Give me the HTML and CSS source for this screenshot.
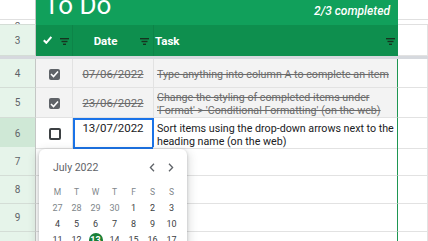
FILE: index.html
```html
<!DOCTYPE html>
<html lang="en">
<head>
  <meta charset="UTF-8">
  <title>To Do</title>
  <link rel="stylesheet" href="styles.css">
</head>
<body>
<div class="sheet">

  <div class="row top">
    <div class="rh rh-top">
      <div class="rh-1"></div>
      <div class="rh-2"><span>2</span></div>
    </div>
    <div class="title">
      <span class="title-text">To Do</span>
      <span class="progress">2/3 completed</span>
    </div>
    <div class="top-d"><div class="rh-1"></div></div>
  </div>

  <div class="row head">
    <div class="rh">3</div>
    <div class="hcell h-a">
      <svg class="tick" width="9" height="8" viewBox="0 0 9 8"><path d="M0.8 4.2 L3.3 6.8 L8.3 1" fill="none" stroke="#fff" stroke-width="2"/></svg>
      <svg class="filter" width="9" height="7" viewBox="0 0 9 7"><rect x="0" y="0" width="9" height="1.4"/><rect x="1.5" y="2.8" width="6" height="1.4"/><rect x="3" y="5.6" width="3" height="1.4"/></svg>
    </div>
    <div class="hcell h-b">
      <span class="hlabel">Date</span>
      <svg class="filter" width="9" height="7" viewBox="0 0 9 7"><rect x="0" y="0" width="9" height="1.4"/><rect x="1.5" y="2.8" width="6" height="1.4"/><rect x="3" y="5.6" width="3" height="1.4"/></svg>
    </div>
    <div class="hcell h-c">
      <span class="hlabel">Task</span>
      <svg class="filter" width="9" height="7" viewBox="0 0 9 7"><rect x="0" y="0" width="9" height="1.4"/><rect x="1.5" y="2.8" width="6" height="1.4"/><rect x="3" y="5.6" width="3" height="1.4"/></svg>
    </div>
    <div class="cell c-d"></div>
  </div>

  <div class="freeze"></div>

  <div class="row r4 done">
    <div class="rh">4</div>
    <div class="cell c-a"><span class="box checked"><svg width="9" height="8" viewBox="0 0 9 8"><path d="M1 4 L3.5 6.5 L8 1.5" fill="none" stroke="#fff" stroke-width="1.6"/></svg></span></div>
    <div class="cell c-b">07/06/2022</div>
    <div class="cell c-c">Type anything into column A to complete an item</div>
    <div class="cell c-d"></div>
  </div>

  <div class="row r5 done">
    <div class="rh">5</div>
    <div class="cell c-a"><span class="box checked"><svg width="9" height="8" viewBox="0 0 9 8"><path d="M1 4 L3.5 6.5 L8 1.5" fill="none" stroke="#fff" stroke-width="1.6"/></svg></span></div>
    <div class="cell c-b">23/06/2022</div>
    <div class="cell c-c">Change the styling of completed items under 'Format' &gt; 'Conditional Formatting' (on the web)</div>
    <div class="cell c-d"></div>
  </div>

  <div class="row r6">
    <div class="rh rh-sel">6</div>
    <div class="cell c-a"><span class="box"></span></div>
    <div class="cell c-b selected">13/07/2022</div>
    <div class="cell c-c">Sort items using the drop-down arrows next to the heading name (on the web)</div>
    <div class="cell c-d"></div>
  </div>

  <div class="row r7">
    <div class="rh">7</div>
    <div class="cell c-a"></div>
    <div class="cell c-b"></div>
    <div class="cell c-c"></div>
    <div class="cell c-d"></div>
  </div>

  <div class="row r8">
    <div class="rh">8</div>
    <div class="cell c-a"></div>
    <div class="cell c-b"></div>
    <div class="cell c-c"></div>
    <div class="cell c-d"></div>
  </div>

  <div class="row r9">
    <div class="rh">9</div>
    <div class="cell c-a"></div>
    <div class="cell c-b"></div>
    <div class="cell c-c"></div>
    <div class="cell c-d"></div>
  </div>

  <div class="row r10">
    <div class="rh">10</div>
    <div class="cell c-a"></div>
    <div class="cell c-b"></div>
    <div class="cell c-c"></div>
    <div class="cell c-d"></div>
  </div>
</div>

<!-- date picker opened on B6 -->
<div class="picker">
  <div class="picker-head">
    <span class="month">July 2022</span>
    <span class="nav">
      <svg width="6" height="9" viewBox="0 0 6 9"><path d="M5 0.8 L1.4 4.5 L5 8.2" fill="none" stroke="#5f6368" stroke-width="1.3"/></svg>
      <svg width="6" height="9" viewBox="0 0 6 9"><path d="M1 0.8 L4.6 4.5 L1 8.2" fill="none" stroke="#5f6368" stroke-width="1.3"/></svg>
    </span>
  </div>
  <div class="days">
    <span class="wd">M</span><span class="wd">T</span><span class="wd">W</span><span class="wd">T</span><span class="wd">F</span><span class="wd">S</span><span class="wd">S</span>
    <span class="other">27</span><span class="other">28</span><span class="other">29</span><span class="other">30</span><span>1</span><span>2</span><span>3</span>
    <span>4</span><span>5</span><span>6</span><span>7</span><span>8</span><span>9</span><span>10</span>
    <span>11</span><span>12</span><span class="today"><b>13</b></span><span>14</span><span>15</span><span>16</span><span>17</span>
  </div>
</div>
</body>
</html>
```

FILE: styles.css
```css
* {
  box-sizing: border-box;
}

body {
  margin: 0;
  width: 428px;
  height: 241px;
  overflow: hidden;
  position: relative;
  background: #fff;
  font-family: Roboto, "Liberation Sans", sans-serif;
  color: #202124;
}

.row {
  display: grid;
  grid-template-columns: 36px 37px 81px 244px 1fr;
}

/* row header column */
.rh {
  display: flex;
  align-items: center;
  justify-content: center;
  background: #e6f4ea;
  border-right: 1px solid #c4c7c5;
  border-bottom: 1px solid #d4ddd6;
  color: #5f6368;
  font-size: 10px;
}

.rh-sel {
  background: #cfe8d6;
}

.rh-top {
  display: block;
  background: #fff;
}

.rh-1 {
  height: 20px;
  border-bottom: 1px solid #e0e0e0;
}

.rh-2 {
  height: 4px;
  overflow: hidden;
  text-align: center;
  line-height: 10px;
  padding-top: 2px;
}

/* title band */
.top {
  height: 25px;
  grid-template-columns: 36px 362px 1fr;
}

.title {
  display: flex;
  justify-content: space-between;
  align-items: flex-start;
  background: #11a05b;
  overflow: hidden;
  color: #fff;
}

.title-text {
  font-size: 26px;
  line-height: 26px;
  margin: -8px 0 0 8px;
}

.progress {
  font-size: 12px;
  line-height: 14px;
  font-style: italic;
  font-weight: 500;
  margin: 4px 8px 0 0;
}

.top-d {
  border-bottom: 1px solid #e0e0e0;
}

/* column headings */
.head {
  height: 31px;
}

.hcell {
  display: flex;
  align-items: center;
  background: #0e8f4e;
  border-right: 1px solid rgba(0, 0, 0, 0.07);
  color: #fff;
  font-weight: 700;
  font-size: 11.5px;
}

.h-c {
  border-right: none;
}

.filter {
  fill: #17331f;
  margin-top: 1px;
}

.h-a {
  padding-left: 7px;
  gap: 8px;
}

.tick {
  margin-top: -1px;
}

.h-b {
  padding-right: 4px;
}

.h-b .hlabel {
  flex: 1;
  text-align: center;
  padding-right: 2px;
}

.h-c {
  padding: 0 3px 0 1px;
}

.h-c .hlabel {
  flex: 1;
}

.freeze {
  height: 3px;
  background: #d6d9de;
}

/* data cells */
.cell {
  border-right: 1px solid #e2e2e2;
  border-bottom: 1px solid #e2e2e2;
  font-size: 11px;
  line-height: 13px;
}

.c-c {
  border-right: 1px solid #1e9652;
  padding: 0 2px 0 3px;
  font-size: 10.7px;
}

.c-a {
  display: flex;
  align-items: center;
  justify-content: center;
  padding: 2px 0 0 1px;
}

.c-b {
  text-align: center;
  font-size: 11.5px;
}

.r4 { height: 29px; }
.r5 { height: 30px; }
.r6 { height: 29px; }
.r7 { height: 29px; }
.r8 { height: 28px; }
.r9 { height: 28px; }
.r10 { height: 30px; }

.done .c-a,
.done .c-b,
.done .c-c {
  background: #f3f3f3;
  color: #6b6b6b;
  text-decoration: line-through;
}

.done .c-b,
.done .c-c {
  display: flex;
  align-items: center;
  padding-top: 2px;
}

.done .c-b {
  justify-content: center;
}

.r6 .c-b,
.r6 .c-c {
  padding-top: 4px;
}

.selected {
  outline: 2px solid #1a73e8;
  outline-offset: -2px;
}

.box {
  width: 12px;
  height: 12px;
  border: 2px solid #3c4043;
  border-radius: 2px;
}

.box.checked {
  display: flex;
  align-items: center;
  justify-content: center;
  width: 11px;
  height: 11px;
  border: none;
  background: #5f6368;
}

/* date picker */
.picker {
  position: absolute;
  left: 39px;
  top: 149px;
  width: 148px;
  height: 110px;
  background: #fff;
  border-radius: 6px;
  box-shadow: 0 1px 3px rgba(60, 64, 67, 0.3), 0 4px 8px 3px rgba(60, 64, 67, 0.15);
  padding: 10px 6px 0 9px;
}

.picker-head {
  display: flex;
  justify-content: space-between;
  align-items: center;
  padding: 0 7px 0 5px;
  height: 16px;
}

.month {
  font-size: 10.5px;
  color: #5f6368;
}

.nav {
  display: flex;
  gap: 13px;
}

.days {
  display: grid;
  grid-template-columns: repeat(7, 19px);
  grid-auto-rows: 16px;
  margin-top: 9px;
  font-size: 9px;
  color: #3c4043;
}

.days span {
  display: flex;
  align-items: center;
  justify-content: center;
}

.days .wd {
  color: #80868b;
  font-size: 8.5px;
}

.days .other {
  color: #80868b;
}

.today b {
  display: flex;
  align-items: center;
  justify-content: center;
  width: 14px;
  height: 14px;
  border-radius: 50%;
  background: #188038;
  color: #fff;
}
```
